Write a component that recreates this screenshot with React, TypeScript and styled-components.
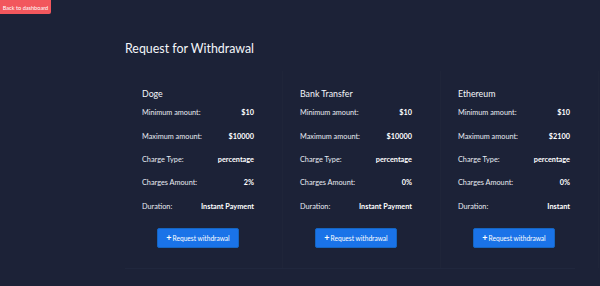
import React from "react";
import styled, { createGlobalStyle } from "styled-components";

const GlobalStyle = createGlobalStyle`
  html, body {
    margin: 0;
    padding: 0;
    background: #1c2237;
    font-family: Lato, "Open Sans", sans-serif;
    color: #e9ecf3;
  }
`;

const Page = styled.div`
  width: 600px;
  height: 286px;
  background: #1c2237;
  overflow: hidden;
`;

const BackButton = styled.button`
  display: block;
  height: 14px;
  width: 51px;
  padding: 0;
  border: none;
  border-radius: 0 0 2px 0;
  background: #f2575d;
  color: #fff;
  font-family: Lato, sans-serif;
  font-size: 5.6px;
  cursor: pointer;
`;

const Main = styled.main`
  padding: 26px 0 0 125px;
`;

const Title = styled.h1`
  margin: 0;
  height: 18px;
  line-height: 18px;
  font-size: 12.4px;
  font-weight: 400;
  color: #f4f6fa;
`;

const Methods = styled.div`
  margin-top: 13px;
  display: grid;
  grid-template-columns: repeat(3, 158px);
  border-bottom: 1px solid #20273d;
  width: 450px;
`;

const Card = styled.section`
  padding: 16px 28px 20px 17px;
  display: flex;
  flex-direction: column;
  border-right: 1px solid #1f2539;
`;

const Name = styled.h3`
  margin: 0;
  height: 14px;
  line-height: 14px;
  font-size: 8.8px;
  font-weight: 400;
  color: #f4f6fa;
`;

const Row = styled.div`
  display: flex;
  justify-content: space-between;
  align-items: center;
  height: 23.4px;
  font-size: 7.3px;
`;

const Label = styled.span`
  color: #e8ebf2;
`;

const Value = styled.span`
  font-weight: 700;
  color: #ffffff;
`;

const RequestButton = styled.button`
  margin: 10px auto 0;
  width: 82px;
  height: 20px;
  border: 1px solid #1565c0;
  border-radius: 2px;
  background: #1a73e8;
  color: #fff;
  font-family: Lato, sans-serif;
  font-size: 6.6px;
  display: flex;
  align-items: center;
  justify-content: center;
  gap: 1px;
  padding: 0;
  cursor: pointer;
`;

const Plus = styled.b`
  font-size: 9px;
  line-height: 1;
  margin-top: -1px;
`;

type Method = {
  name: string;
  min: string;
  max: string;
  type: string;
  charge: string;
  duration: string;
};

const methods: Method[] = [
  { name: "Doge", min: "$10", max: "$10000", type: "percentage", charge: "2%", duration: "Instant Payment" },
  { name: "Bank Transfer", min: "$10", max: "$10000", type: "percentage", charge: "0%", duration: "Instant Payment" },
  { name: "Ethereum", min: "$10", max: "$2100", type: "percentage", charge: "0%", duration: "Instant" },
];

export default function App() {
  return (
    <Page>
      <GlobalStyle />
      <BackButton>Back to dashboard</BackButton>
      <Main>
        <Title>Request for Withdrawal</Title>
        <Methods>
          {methods.map((m) => (
            <Card key={m.name}>
              <Name>{m.name}</Name>
              <Row>
                <Label>Minimum amount:</Label>
                <Value>{m.min}</Value>
              </Row>
              <Row>
                <Label>Maximum amount:</Label>
                <Value>{m.max}</Value>
              </Row>
              <Row>
                <Label>Charge Type:</Label>
                <Value>{m.type}</Value>
              </Row>
              <Row>
                <Label>Charges Amount:</Label>
                <Value>{m.charge}</Value>
              </Row>
              <Row>
                <Label>Duration:</Label>
                <Value>{m.duration}</Value>
              </Row>
              <RequestButton>
                <Plus>+</Plus>Request withdrawal
              </RequestButton>
            </Card>
          ))}
        </Methods>
      </Main>
    </Page>
  );
}
